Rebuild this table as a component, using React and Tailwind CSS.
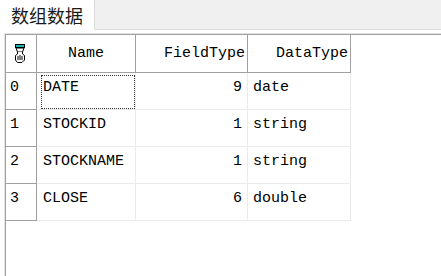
import React from "react";

const rows = [
  { idx: "0", name: "DATE", fieldType: "9", dataType: "date" },
  { idx: "1", name: "STOCKID", fieldType: "1", dataType: "string" },
  { idx: "2", name: "STOCKNAME", fieldType: "1", dataType: "string" },
  { idx: "3", name: "CLOSE", fieldType: "6", dataType: "double" },
];

// Small indicator glyph shown in the top-left corner cell of the grid
function IndicatorIcon() {
  return (
    <svg width="12" height="20" viewBox="0 0 12 20" className="block">
      <rect x="1.5" y="0.5" width="9" height="3" fill="#1fb5b0" stroke="#000" strokeWidth="1" />
      <path d="M2 4 L10 4 L8.5 8 L3.5 8 Z" fill="#fff" stroke="#000" strokeWidth="1" />
      <path
        d="M3.5 8 L3.5 10 L1.5 11.5 L1.5 16 L3.5 18.5 L8 18.5 L10.5 16 L10.5 11.5 L8.5 10 L8.5 8"
        fill="#fff"
        stroke="#000"
        strokeWidth="1"
      />
      <path d="M4 12 L4 16 M6 11 L6 16 M8 12 L8 16" stroke="#000" strokeWidth="1" />
    </svg>
  );
}

export default function App() {
  return (
    <div className="w-[441px] h-[276px] bg-white overflow-hidden font-['Liberation_Mono',monospace] text-[15px] text-black">
      {/* tab strip */}
      <div className="flex h-[30px]">
        <div className="w-[94px] bg-white flex items-center justify-center font-['Noto_Sans_CJK_SC',sans-serif] text-[18px] text-[#1a1a1a] leading-none pb-[1px]">
          数组数据
        </div>
        <div className="flex-1 bg-[#f0f0f0] border-l border-b border-[#dcdcdc]" />
      </div>

      {/* grid frame */}
      <div className="mt-[3px] ml-[4px] h-[243px] border-t border-l border-[#e2e2e2]">
        <div className="h-full border-t border-l border-[#a0a0a0]">
          {/* header */}
          <div className="flex h-[38px]">
            <div className="w-[31px] shrink-0 border-r border-b border-[#a0a0a0] flex items-center pl-[8px]">
              <IndicatorIcon />
            </div>
            <div className="w-[99px] shrink-0 border-r border-b border-[#a0a0a0] flex items-center justify-center leading-none">
              Name
            </div>
            <div className="w-[112px] shrink-0 border-r border-b border-[#a0a0a0] flex items-center justify-end pr-[2px] leading-none">
              FieldType
            </div>
            <div className="w-[103px] shrink-0 border-r border-b border-[#a0a0a0] flex items-center justify-end pr-[2px] leading-none">
              DataType
            </div>
          </div>

          {/* data rows */}
          {rows.map((r, i) => (
            <div key={r.idx} className="flex h-[37px] leading-[16px]">
              <div className="w-[31px] shrink-0 border-r border-b border-[#a0a0a0] pl-[4px] pt-[7px]">
                {r.idx}
              </div>
              <div className="relative w-[99px] shrink-0 border-r border-b border-[#ebebeb] pl-[6px] pt-[7px]">
                {i === 0 && (
                  <div className="absolute left-[4px] right-0 top-[2px] bottom-0 border border-dotted border-[#333]" />
                )}
                {r.name}
              </div>
              <div className="w-[112px] shrink-0 border-r border-b border-[#ebebeb] pr-[5px] pt-[7px] text-right">
                {r.fieldType}
              </div>
              <div className="w-[103px] shrink-0 border-r border-b border-[#ebebeb] pl-[5px] pt-[7px]">
                {r.dataType}
              </div>
            </div>
          ))}
        </div>
      </div>
    </div>
  );
}
